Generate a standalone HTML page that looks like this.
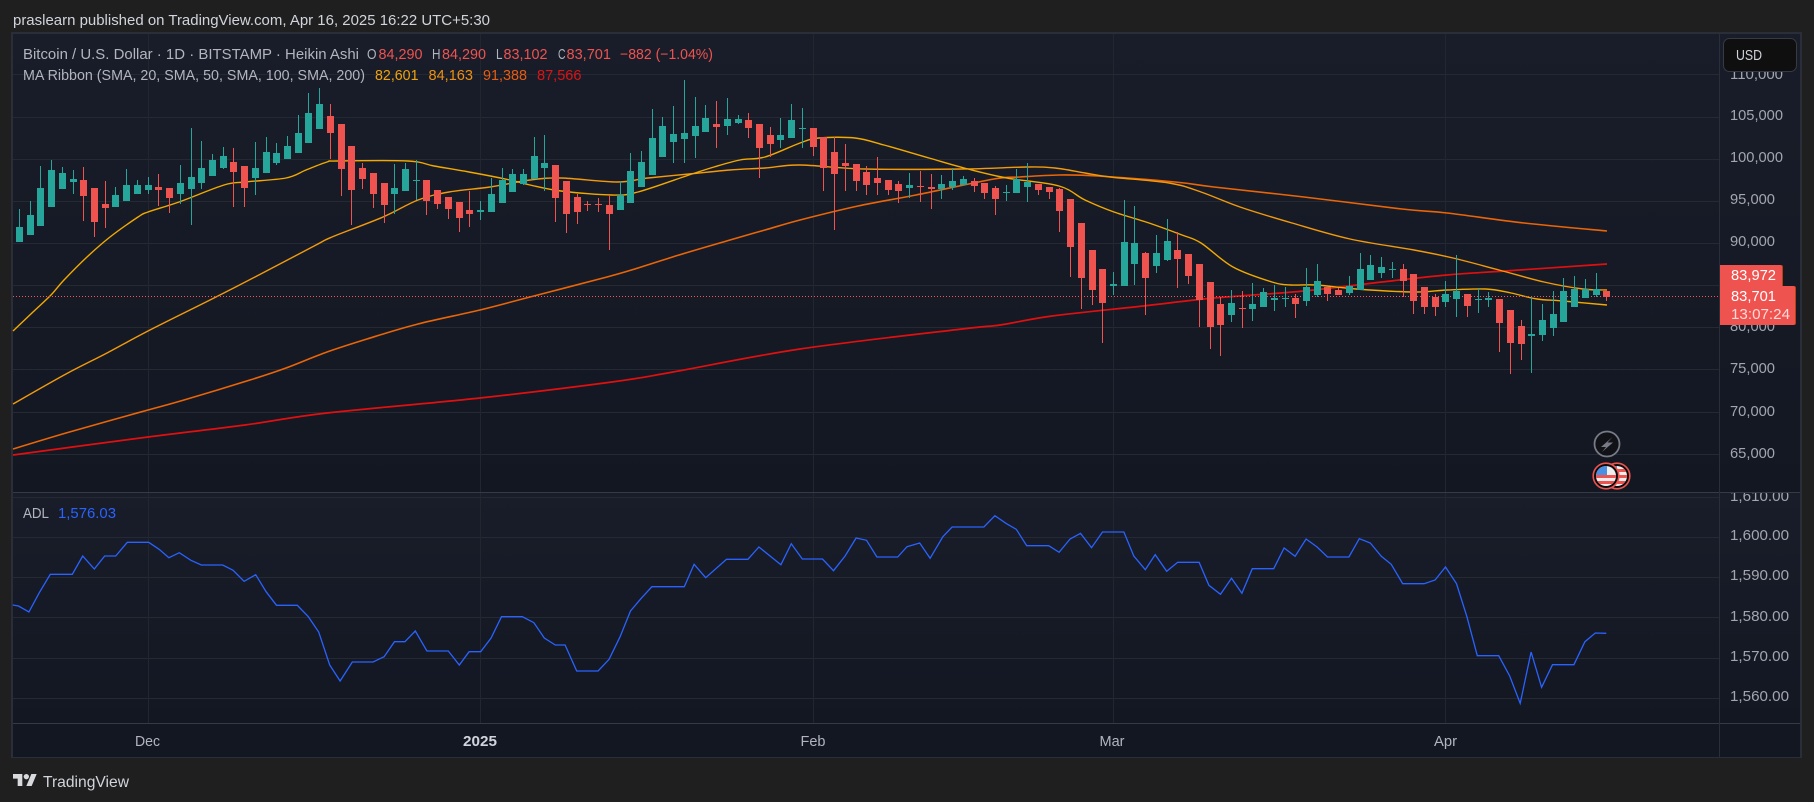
<!DOCTYPE html>
<html lang="en">
<head>
<meta charset="utf-8">
<title>BTC chart</title>
<style>
html,body{margin:0;padding:0;background:#1f1f1f;width:1814px;height:802px;overflow:hidden}
svg{display:block}
text{font-family:"Liberation Sans",Arial,sans-serif;font-size:14.5px}
.ax{fill:#a3a6af;font-size:15px}
.lg{fill:#b2b5be}
.rd{fill:#ef5350}
.tm{fill:#b2b5be;text-anchor:middle;font-size:15px}
.wt{font-size:15px}
</style>
</head>
<body>
<svg xmlns="http://www.w3.org/2000/svg" width="1814" height="802" viewBox="0 0 1814 802">
<defs>
<linearGradient id="g1" x1="0" y1="0" x2="0" y2="1"><stop offset="0" stop-color="#191d29"/><stop offset="1" stop-color="#131722"/></linearGradient>
<clipPath id="adlc"><rect x="1720" y="493" width="80" height="230"/></clipPath>
<clipPath id="f1"><circle cx="1606" cy="476" r="10"/></clipPath>
<clipPath id="f2"><circle cx="1617" cy="476" r="10"/></clipPath>
</defs>
<rect width="1814" height="802" fill="#1f1f1f"/>
<text x="13" y="25" fill="#d1d4dc" textLength="477" lengthAdjust="spacingAndGlyphs">praslearn published on TradingView.com, Apr 16, 2025 16:22 UTC+5:30</text>

<!-- chart frame -->
<rect x="11" y="32" width="1791" height="726" fill="#2a2e39"/>
<rect x="13" y="34" width="1787" height="458" fill="url(#g1)"/>
<rect x="13" y="493" width="1787" height="230" fill="url(#g1)"/>
<rect x="13" y="724" width="1787" height="33" fill="#131722"/>

<!-- grid -->
<g fill="#252934" shape-rendering="crispEdges">
<rect x="13" y="74" width="1706" height="1"/><rect x="13" y="117" width="1706" height="1"/><rect x="13" y="159" width="1706" height="1"/><rect x="13" y="201" width="1706" height="1"/><rect x="13" y="243" width="1706" height="1"/><rect x="13" y="285" width="1706" height="1"/><rect x="13" y="327" width="1706" height="1"/><rect x="13" y="369" width="1706" height="1"/><rect x="13" y="412" width="1706" height="1"/><rect x="13" y="454" width="1706" height="1"/>
<rect x="13" y="497" width="1706" height="1"/><rect x="13" y="537" width="1706" height="1"/><rect x="13" y="577" width="1706" height="1"/><rect x="13" y="617" width="1706" height="1"/><rect x="13" y="658" width="1706" height="1"/><rect x="13" y="698" width="1706" height="1"/>
</g>
<g fill="#222630" shape-rendering="crispEdges">
<rect x="148" y="34" width="1" height="689"/><rect x="480" y="34" width="1" height="689"/><rect x="813" y="34" width="1" height="689"/><rect x="1113" y="34" width="1" height="689"/><rect x="1445" y="34" width="1" height="689"/>
</g>
<g fill="#363a45" shape-rendering="crispEdges">
<rect x="13" y="492" width="1787" height="1"/>
<rect x="13" y="723" width="1787" height="1"/>
<rect x="1719" y="34" width="1" height="723" fill="#2a2e39"/>
</g>

<g id="lines" fill="none" stroke-linejoin="round" stroke-linecap="butt"></g>
<line x1="13" y1="296.5" x2="1719" y2="296.5" stroke="#f7525f" stroke-width="1" stroke-dasharray="1 2"/>
<g id="candles" shape-rendering="crispEdges"></g>
<path id="adl" fill="none" stroke="#2962ff" stroke-width="1.3" stroke-linejoin="miter"/>

<!-- legend -->
<text class="lg" x="23" y="59" textLength="336" lengthAdjust="spacingAndGlyphs">Bitcoin / U.S. Dollar · 1D · BITSTAMP · Heikin Ashi</text>
<text class="lg" x="367" y="59" textLength="9.5" lengthAdjust="spacingAndGlyphs">O</text><text class="rd" x="378.5" y="59" textLength="44" lengthAdjust="spacingAndGlyphs">84,290</text>
<text class="lg" x="432" y="59" textLength="8.5" lengthAdjust="spacingAndGlyphs">H</text><text class="rd" x="442" y="59" textLength="44" lengthAdjust="spacingAndGlyphs">84,290</text>
<text class="lg" x="496" y="59" textLength="6.5" lengthAdjust="spacingAndGlyphs">L</text><text class="rd" x="503.5" y="59" textLength="44" lengthAdjust="spacingAndGlyphs">83,102</text>
<text class="lg" x="558" y="59" textLength="7.5" lengthAdjust="spacingAndGlyphs">C</text><text class="rd" x="566.5" y="59" textLength="44.5" lengthAdjust="spacingAndGlyphs">83,701</text>
<text class="rd" x="620" y="59" textLength="93" lengthAdjust="spacingAndGlyphs">−882 (−1.04%)</text>
<text class="lg" x="23" y="80" textLength="342" lengthAdjust="spacingAndGlyphs">MA Ribbon (SMA, 20, SMA, 50, SMA, 100, SMA, 200)</text>
<text x="375" y="80" fill="#f0a30a" textLength="43.5" lengthAdjust="spacingAndGlyphs">82,601</text>
<text x="428.5" y="80" fill="#ec9010" textLength="44.5" lengthAdjust="spacingAndGlyphs">84,163</text>
<text x="483" y="80" fill="#e65c10" textLength="44" lengthAdjust="spacingAndGlyphs">91,388</text>
<text x="537" y="80" fill="#dc1414" textLength="44.5" lengthAdjust="spacingAndGlyphs">87,566</text>
<text x="23" y="518" class="lg" textLength="26" lengthAdjust="spacingAndGlyphs">ADL</text>
<text x="58" y="518" fill="#2962ff" textLength="58" lengthAdjust="spacingAndGlyphs">1,576.03</text>

<!-- price axis -->
<text class="ax" x="1730" y="79" textLength="53" lengthAdjust="spacingAndGlyphs">110,000</text>
<text class="ax" x="1730" y="120" textLength="53" lengthAdjust="spacingAndGlyphs">105,000</text>
<text class="ax" x="1730" y="162" textLength="53" lengthAdjust="spacingAndGlyphs">100,000</text>
<text class="ax" x="1730" y="204" textLength="45" lengthAdjust="spacingAndGlyphs">95,000</text>
<text class="ax" x="1730" y="246" textLength="45" lengthAdjust="spacingAndGlyphs">90,000</text>
<text class="ax" x="1730" y="331" textLength="45" lengthAdjust="spacingAndGlyphs">80,000</text>
<text class="ax" x="1730" y="373" textLength="45" lengthAdjust="spacingAndGlyphs">75,000</text>
<text class="ax" x="1730" y="416" textLength="45" lengthAdjust="spacingAndGlyphs">70,000</text>
<text class="ax" x="1730" y="458" textLength="45" lengthAdjust="spacingAndGlyphs">65,000</text>
<g clip-path="url(#adlc)">
<text class="ax" x="1730" y="501" textLength="59" lengthAdjust="spacingAndGlyphs">1,610.00</text>
<text class="ax" x="1730" y="540" textLength="59" lengthAdjust="spacingAndGlyphs">1,600.00</text>
<text class="ax" x="1730" y="580" textLength="59" lengthAdjust="spacingAndGlyphs">1,590.00</text>
<text class="ax" x="1730" y="621" textLength="59" lengthAdjust="spacingAndGlyphs">1,580.00</text>
<text class="ax" x="1730" y="661" textLength="59" lengthAdjust="spacingAndGlyphs">1,570.00</text>
<text class="ax" x="1730" y="701" textLength="59" lengthAdjust="spacingAndGlyphs">1,560.00</text>
</g>

<!-- time axis -->
<text class="tm" x="147.5" y="746" textLength="25" lengthAdjust="spacingAndGlyphs">Dec</text>
<text class="tm" x="480" y="746" textLength="34" lengthAdjust="spacingAndGlyphs" style="font-weight:700;fill:#d1d4dc">2025</text>
<text class="tm" x="813" y="746" textLength="25" lengthAdjust="spacingAndGlyphs">Feb</text>
<text class="tm" x="1112" y="746" textLength="25" lengthAdjust="spacingAndGlyphs">Mar</text>
<text class="tm" x="1445.5" y="746" textLength="23" lengthAdjust="spacingAndGlyphs">Apr</text>

<!-- USD -->
<rect x="1723.5" y="38.5" width="73" height="33" rx="6" fill="#0f0f0f" stroke="#363a45"/>
<text class="wt" x="1736" y="60" fill="#d1d4dc" textLength="26" lengthAdjust="spacingAndGlyphs">USD</text>

<!-- price labels -->
<path d="M1720 265h61a2 2 0 0 1 2 2v19a2 2 0 0 1-2 2h-61z" fill="#b5410f"/>
<path d="M1720 265h60a2 2 0 0 1 2 2v19a2 2 0 0 1-2 2h-60z" fill="#ef5350"/>
<text class="wt" x="1731" y="280" fill="#fff" textLength="45" lengthAdjust="spacingAndGlyphs">83,972</text>
<path d="M1720 286h74a2 2 0 0 1 2 2v35a2 2 0 0 1-2 2h-74z" fill="#b5410f"/>
<path d="M1720 286h73a2 2 0 0 1 2 2v35a2 2 0 0 1-2 2h-73z" fill="#ef5350"/>
<text class="wt" x="1731" y="301" fill="#fff" textLength="45" lengthAdjust="spacingAndGlyphs">83,701</text>
<text class="wt" x="1731" y="319" fill="#ffd9d6" textLength="59" lengthAdjust="spacingAndGlyphs">13:07:24</text>

<!-- events -->
<circle cx="1607" cy="444" r="12.5" fill="#101218" stroke="#787b86" stroke-width="1.8"/>
<path d="M1612.5 437 L1601 447 H1606 L1602 452 L1613 442.5 H1607.5 Z" fill="#787b86"/>
<g>
<circle cx="1617" cy="476" r="12.8" fill="#0c0c0c" stroke="#ef5350" stroke-width="1.6"/>
<g clip-path="url(#f2)"><rect x="1606" y="465" width="22" height="22" fill="#eee"/><rect x="1606" y="469" width="22" height="3" fill="#ef5350"/><rect x="1606" y="475" width="22" height="3" fill="#ef5350"/><rect x="1606" y="481" width="22" height="3" fill="#ef5350"/><rect x="1606" y="465" width="11" height="9" fill="#4a90e2"/></g>
<circle cx="1606" cy="476" r="12.8" fill="#0c0c0c" stroke="#ef5350" stroke-width="1.6"/>
<g clip-path="url(#f1)"><rect x="1595" y="465" width="22" height="22" fill="#eee"/><rect x="1595" y="475" width="22" height="3" fill="#ef5350"/><rect x="1595" y="481" width="22" height="3" fill="#ef5350"/><rect x="1595" y="465" width="12" height="10" fill="#4a90e2"/></g>
</g>

<!-- logo -->
<svg x="13" y="771.3" width="24" height="18.7" viewBox="0 0 36 28"><path d="M14 22H7V11H0V4h14v18zM28 22h-8l7.5-18h8L28 22z" fill="#d9dade"/><circle cx="20" cy="8" r="4" fill="#d9dade"/></svg>
<text x="43" y="787" fill="#d1d4dc" style="font-size:16px" textLength="86" lengthAdjust="spacingAndGlyphs">TradingView</text>
</svg>

<script>
(function(){
var NS='http://www.w3.org/2000/svg';
function groupData(x0,y0,s){return function(a){return [Math.floor(x0+a[0]/s),y0+a[1]/s,y0+a[2]/s,y0+a[3]/s,y0+a[4]/s,a[5]];};}
var g='g',r='r';
var A=[[59,501,546,447,546,g],[92,465,525,423,525,g],[122,384,498,318,498,g],[155,330,441,300,441,g],[188,339,387,321,387,g],[221,357,366,330,402,g],[251,360,408,321,483,r],[284,384,486,384,531,r],[317,432,444,363,504,r],[347,405,441,381,441,g],[380,375,423,327,423,g],[413,375,402,360,402,g],[446,375,390,351,402,g],[476,381,390,342,438,r],[509,384,414,384,459,r],[542,369,402,315,432,g],[575,351,387,204,495,g],[605,324,369,243,387,g],[638,300,348,282,348,g],[671,288,324,261,327,g],[701,306,336,264,441,r],[734,318,384,318,441,r],[767,324,354,246,405,g],[800,276,339,231,339,g],[830,279,309,249,315,g],[863,258,297,228,297,g],[896,219,279,165,279,g],[926,159,249,99,249,g],[959,132,207,84,207,g],[992,168,219,132,297,r],[1025,192,327,192,408,r],[1055,258,390,258,495,r],[1088,324,357,309,387,r],[1121,339,402,339,444,r],[1154,369,435,369,489,r],[1184,384,402,312,462,g]];
var B=[[16,327,393,309,393,g],[49,360,363,300,420,g],[79,360,423,360,465,r],[112,390,432,390,447,r],[145,411,447,411,477,r],[178,426,474,426,516,r],[208,450,462,393,501,r],[241,450,456,423,480,g],[274,402,456,354,456,g],[307,360,429,324,429,g],[337,342,396,327,396,g],[370,342,372,327,375,g],[403,288,357,231,357,g],[433,309,324,225,393,g],[466,315,414,315,486,r],[499,363,462,363,519,r],[532,411,456,403,492,r],[562,432,434,423,453,r],[595,432,434,414,456,r],[628,435,462,405,570,r],[661,405,450,363,450,g],[691,333,429,279,429,g],[724,306,381,273,381,g],[757,234,345,147,345,g],[787,198,291,171,291,g],[820,222,246,138,309,g],[853,219,237,60,309,g],[886,198,228,111,294,g],[916,174,216,135,216,g],[949,192,201,123,264,r],[982,177,198,114,225,g],[1015,177,189,165,192,g],[1045,180,204,159,234,r],[1078,192,264,192,354,r],[1111,225,252,201,291,r],[1141,225,240,174,264,g],[1174,180,234,132,234,g]];
var C=[[7,84,87,24,144,g],[40,84,141,84,168,r],[70,111,204,111,273,r],[103,156,222,111,390,r],[136,189,198,132,273,r],[169,192,243,192,273,r],[199,216,255,198,285,r],[232,234,249,171,285,r],[265,240,270,240,285,r],[295,252,273,243,309,r],[328,255,264,219,294,g],[361,258,261,213,306,r],[394,261,267,222,327,r],[424,252,267,225,297,g],[457,243,261,204,270,g],[490,237,255,228,255,g],[523,243,258,234,276,r],[553,249,279,249,297,r],[586,264,297,258,345,r],[619,276,279,255,303,g],[649,237,279,207,279,g],[682,246,261,189,306,g],[715,252,270,252,285,r],[748,261,276,261,297,r],[778,267,333,264,396,r],[811,297,441,297,531,r],[844,369,534,369,627,r],[877,450,570,450,615,r],[907,507,609,507,729,r],[940,552,558,516,585,g],[973,426,558,300,558,g],[1003,429,492,318,555,g],[1036,459,534,456,645,r],[1069,459,498,405,519,g],[1102,423,480,357,483,g],[1132,450,477,396,564,r],[1165,462,528,462,552,r],[1198,492,600,492,681,r]];
var D=[[31,186,321,186,387,r],[61,252,315,231,408,r],[94,249,285,210,306,g],[127,264,267,213,324,r],[157,252,267,189,303,g],[190,216,261,204,261,g],[223,234,240,195,273,g],[256,234,237,201,261,g],[286,234,252,222,294,r],[319,201,243,144,258,g],[352,183,225,132,231,g],[382,201,222,201,243,r],[415,210,225,204,225,r],[448,198,219,168,225,g],[481,147,210,99,210,g],[511,135,180,105,180,g],[544,141,159,111,174,g],[577,147,150,126,174,g],[610,147,183,132,231,r],[640,162,243,162,282,r],[673,201,261,201,282,r],[706,231,261,222,288,r],[736,222,246,183,261,g],[769,213,237,105,291,g],[802,222,258,222,291,r],[835,237,240,204,279,g],[865,234,240,216,261,g],[898,237,309,237,396,r],[931,270,369,270,462,r],[964,318,372,300,420,r],[994,342,348,231,459,g],[1027,300,345,252,363,g],[1060,282,324,213,348,g],[1090,213,306,174,306,g],[1123,207,261,168,261,g],[1156,207,234,177,234,g],[1189,207,225,159,231,g],[1219,213,231,213,243,r]];
var all=A.map(groupData(0,60,3)).concat(B.map(groupData(400,60,3)),C.map(groupData(800,100,3)),D.map(groupData(1200,220,3)));
var paths={g:'',r:''};
all.forEach(function(c){
  var x=c[0],t=Math.round(c[1]),b=Math.max(Math.round(c[2]),t+1),wt=Math.round(c[3]),wb=Math.round(c[4]);
  paths[c[5]]+='M'+x+' '+wt+'h1V'+wb+'h-1zM'+(x-3)+' '+t+'h7V'+b+'h-7z';
});
var cg=document.getElementById('candles');
[['g','#26a69a'],['r','#ef5350']].forEach(function(p){
  var e=document.createElementNS(NS,'path');e.setAttribute('d',paths[p[0]]);e.setAttribute('fill',p[1]);cg.appendChild(e);
});

function smooth(pts){
  var d='M'+pts[0][0]+' '+pts[0][1];
  for(var i=0;i<pts.length-1;i++){
    var p0=pts[i-1]||pts[i],p1=pts[i],p2=pts[i+1],p3=pts[i+2]||p2;
    var c1x=p1[0]+(p2[0]-p0[0])/6,c1y=p1[1]+(p2[1]-p0[1])/6,c2x=p2[0]-(p3[0]-p1[0])/6,c2y=p2[1]-(p3[1]-p1[1])/6;
    d+='C'+c1x.toFixed(1)+' '+c1y.toFixed(1)+' '+c2x.toFixed(1)+' '+c2y.toFixed(1)+' '+p2[0]+' '+p2[1];
  }
  return d;
}
var L1=[[13,331],[33,312],[51,295],[64,280],[87,257],[110,237],[138,217],[148,212],[179,202],[224,185],[245,182],[286,178],[306,170],[327,162],[337,161],[408,161],[434,166],[469,172],[510,180],[530,185],[561,191],[612,195],[638,192],[689,175],[714,167],[740,160],[765,157],[800,143],[819,138],[855,138],[884,145],[929,158],[968,169],[1007,178],[1059,186],[1085,200],[1114,212],[1149,223],[1182,235],[1201,243],[1233,267],[1272,282],[1291,285],[1317,285],[1356,289],[1414,292],[1447,290],[1486,289],[1511,293],[1537,299],[1563,301],[1607,305]];
var L2=[[13,404],[66,374],[107,353],[148,331],[214,298],[255,277],[316,245],[332,237],[383,217],[418,200],[449,192],[490,187],[530,180],[561,178],[617,182],[648,178],[689,174],[730,170],[765,168],[800,165],[865,169],[962,169],[1026,167],[1055,168],[1085,173],[1110,177],[1169,183],[1201,192],[1240,207],[1292,223],[1350,239],[1414,250],[1453,258],[1499,270],[1544,282],[1583,289],[1607,290]];
var L3=[[13,449],[66,433],[112,420],[148,410],[184,400],[250,380],[286,368],[327,352],[367,339],[418,324],[480,310],[530,297],[607,277],[638,268],[679,255],[730,240],[765,230],[800,220],[858,206],[916,195],[994,179],[1020,177],[1059,175],[1098,176],[1175,182],[1214,187],[1304,197],[1402,209],[1447,213],[1524,223],[1607,231]];
var L4=[[13,455],[148,437],[245,425],[327,413],[480,398],[612,382],[673,372],[800,349],[962,329],[1000,325],[1052,316],[1143,306],[1214,298],[1304,291],[1382,282],[1447,275],[1505,271],[1607,264]];
var lg=document.getElementById('lines');
[[L4,'#e01010',1.7],[L3,'#ea6508',1.6],[L2,'#f29a0c',1.4],[L1,'#f2a900',1.4]].forEach(function(l){
  var e=document.createElementNS(NS,'path');e.setAttribute('d',smooth(l[0]));e.setAttribute('stroke',l[1]);e.setAttribute('stroke-width',l[2]);lg.appendChild(e);
});

var sx=1568/907;
var a1=[[22,375],[32,378],[50,396],[68,338],[87,283],[125,283],[143,228],[163,267],[181,228],[200,228],[220,187],[257,187],[275,208],[292,233],[310,218],[330,241],[348,255],[385,255],[403,271],[422,304],[442,284],[460,335],[478,376],[514,376],[533,410],[551,456],[570,555],[588,603],[609,546],[645,546],[664,530],[682,485],[700,485],[718,453],[738,513],[775,513],[794,555],[811,515],[831,515],[849,474],[867,410],[903,410],[923,428],[941,474],[960,495],[977,495],[997,573],[1034,573],[1053,538],[1072,470],[1090,393],[1108,356],[1127,320],[1183,320],[1200,253],[1220,293],[1256,238],[1293,238],[1312,201],[1350,254],[1368,191],[1387,237],[1422,237],[1441,272],[1461,228],[1480,174],[1498,181],[1516,231],[1552,231]];
var a2=[[0,200],[22,189],[40,235],[62,170],[78,141],[133,141],[152,107],[172,131],[189,148],[207,197],[245,197],[263,217],[282,177],[300,160],[319,203],[338,156],[375,156],[392,228],[412,269],[429,224],[449,274],[468,247],[505,247],[522,316],[542,343],[561,295],[579,340],[597,266],[634,266],[652,204],[671,229],[690,177],[709,201],[727,231],[764,231],[782,176],[801,189],[820,229],[837,253],[857,311],[894,311],[913,300],[931,261],[950,311],[968,410],[986,527],[1023,527],[1042,588],[1060,670],[1079,516],[1097,622],[1116,554],[1153,554],[1172,485],[1190,459],[1209,460]];
var pts=a1.map(function(p){return [(p[0]/sx).toFixed(1),(480+p[1]/3).toFixed(1)];}).concat(a2.map(function(p){return [(907+p[0]/sx).toFixed(1),(480+p[1]/3).toFixed(1)];}));
document.getElementById('adl').setAttribute('d','M'+pts.map(function(p){return p.join(' ');}).join('L'));
})();
</script>
</body>
</html>
